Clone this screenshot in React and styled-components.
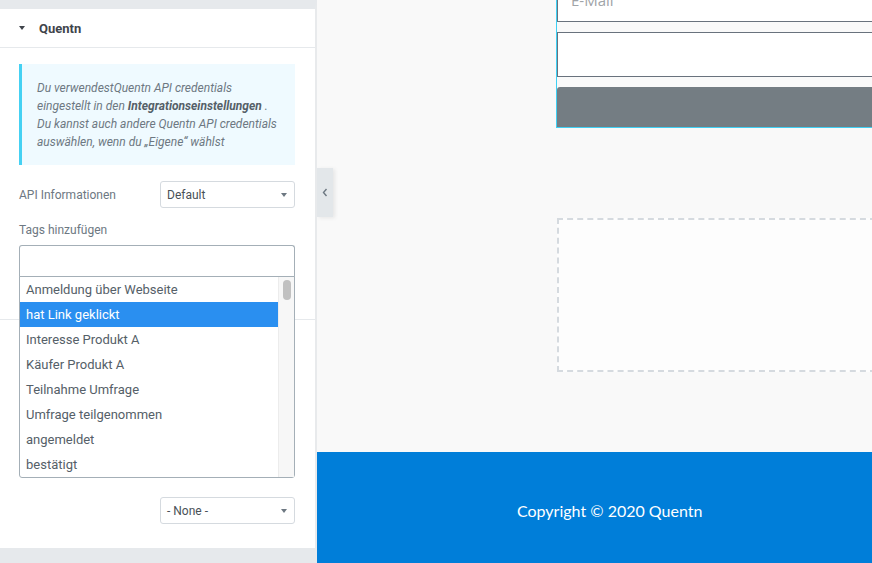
import React from 'react';
import styled, { createGlobalStyle } from 'styled-components';

const GlobalStyle = createGlobalStyle`
    html, body {
        margin: 0;
        padding: 0;
        height: 100%;
        overflow: hidden;
    }
    body {
        font-family: Roboto, "Liberation Sans", sans-serif;
    }
`;

const Screen = styled.div`
    display: flex;
    width: 872px;
    height: 563px;
    overflow: hidden;
`;

const Panel = styled.aside`
    width: 317px;
    flex-shrink: 0;
    display: flex;
    flex-direction: column;
    background: #fff;
    border-right: 2px solid #e8eaec;
    border-top: 9px solid #e6e9ec;
    border-bottom: 15px solid #e6e9ec;
    box-sizing: border-box;
`;

const SectionHead = styled.div`
    height: 39px;
    display: flex;
    align-items: center;
    gap: 14px;
    padding-left: 19px;
    border-bottom: 1px solid #e6e9ec;
    box-sizing: border-box;
    font-size: 13px;
    font-weight: 700;
    color: #3f444b;
`;

const Caret = styled.span`
    width: 0;
    height: 0;
    border-left: 3.5px solid transparent;
    border-right: 3.5px solid transparent;
    border-top: 4px solid ${p => p.color || '#495157'};
`;

const SectionBody = styled.div`
    padding: 16px 20px 0 19px;
    display: flex;
    flex-direction: column;
`;

const InfoBox = styled.div`
    background: #effaff;
    border-left: 3px solid #45d1f3;
    padding: 15px 10px 14px 15px;
    font-size: 12px;
    font-style: italic;
    line-height: 18px;
    color: #6d7882;
    white-space: nowrap;

    b {
        font-weight: 700;
        color: #556068;
    }
`;

const ControlRow = styled.div`
    display: flex;
    align-items: center;
    justify-content: space-between;
    margin-top: ${p => p.$top || 0}px;
`;

const Label = styled.div`
    font-size: 12px;
    color: #6d7882;
    margin-top: ${p => p.$top || 0}px;
`;

const Select = styled.div`
    width: 135px;
    height: 27px;
    box-sizing: border-box;
    border: 1px solid #d5dadf;
    border-radius: 3px;
    display: flex;
    align-items: center;
    justify-content: space-between;
    padding: 0 7px 0 6px;
    font-size: 12px;
    color: #495157;
`;

const TagsField = styled.div`
    position: relative;
    margin-top: 8px;
`;

const TagsInput = styled.div`
    height: 32px;
    box-sizing: border-box;
    border: 1px solid #a4afb7;
    border-bottom: none;
    border-radius: 3px 3px 0 0;
    background: #fff;
`;

const DropList = styled.ul`
    position: absolute;
    top: 31px;
    left: 0;
    right: 0;
    margin: 0;
    padding: 0;
    list-style: none;
    background: #fff;
    border: 1px solid #a4afb7;
    border-radius: 0 0 3px 3px;
    padding-right: 16px;
    z-index: 5;

    &::after {
        content: '';
        position: absolute;
        top: 0;
        right: 0;
        bottom: 0;
        width: 15px;
        background: #f7f7f7;
        border-left: 1px solid #ececec;
    }
`;

const Thumb = styled.span`
    position: absolute;
    top: 3px;
    right: 3px;
    width: 8px;
    height: 20px;
    border-radius: 4px;
    background: #c1c1c1;
    z-index: 1;
`;

const DropItem = styled.li`
    height: 25px;
    line-height: 25px;
    padding-left: 6px;
    font-size: 13px;
    color: ${p => (p.$active ? '#fff' : '#556068')};
    background: ${p => (p.$active ? '#2a8ff0' : 'transparent')};
`;

const Separator = styled.div`
    height: 1px;
    background: #e6e9ec;
    margin-top: 42px;
`;

const NoneRow = styled.div`
    display: flex;
    justify-content: flex-end;
    padding: 177px 20px 0 19px;
`;

const Canvas = styled.main`
    position: relative;
    flex: 1;
    display: flex;
    flex-direction: column;
    background: #f9f9f9;
    overflow: hidden;
`;

const Toggle = styled.div`
    position: absolute;
    left: 0;
    top: 168px;
    width: 16px;
    height: 49px;
    background: #e3e7ea;
    box-shadow: 2px 1px 4px rgba(0, 0, 0, 0.08);
    display: flex;
    align-items: center;
    justify-content: center;
    color: #6d7882;
`;

const PageContent = styled.div`
    flex: 1;
    padding-left: 239px;
`;

const FormWidget = styled.div`
    width: 420px;
    margin-top: -23px;
    border: 1px solid #3fd0f4;
    display: flex;
    flex-direction: column;
    gap: 10px;
`;

const Field = styled.div`
    height: ${p => p.$h}px;
    box-sizing: border-box;
    background: #fff;
    border: 1px solid #69727d;
    display: flex;
    align-items: center;
    padding-left: 13px;
    font-family: "Open Sans", "Liberation Sans", sans-serif;
    font-size: 15px;
    color: #a0a4a8;
`;

const SubmitButton = styled.div`
    height: 40px;
    background: #747d83;
    border-radius: 3px 0 0 0;
`;

const DropZone = styled.div`
    width: 420px;
    height: 154px;
    margin-top: 90px;
    margin-left: 1px;
    box-sizing: border-box;
    border: 2px dashed #d5dadf;
    background: #fdfdfd;
`;

const Footer = styled.footer`
    height: 111px;
    flex-shrink: 0;
    background: #007ed9;
    display: flex;
    align-items: center;
    padding-left: 200px;
    padding-top: 6px;
    font-family: Lato, "Liberation Sans", sans-serif;
    font-size: 16px;
    color: #fff;
    box-sizing: border-box;
`;

const tags = [
    'Anmeldung über Webseite',
    'hat Link geklickt',
    'Interesse Produkt A',
    'Käufer Produkt A',
    'Teilnahme Umfrage',
    'Umfrage teilgenommen',
    'angemeldet',
    'bestätigt',
];

const Chevron = () => (
    <svg width="6" height="9" viewBox="0 0 6 9">
        <path d="M4.5 1 L1.5 4.5 L4.5 8" fill="none" stroke="currentColor" strokeWidth="1.4" />
    </svg>
);

const App = () => {
    return (
        <Screen>
            <GlobalStyle />
            <Panel>
                <SectionHead>
                    <Caret color="#3f444b" />
                    Quentn
                </SectionHead>
                <SectionBody>
                    <InfoBox>
                        Du verwendestQuentn API credentials<br />
                        eingestellt in den <b>Integrationseinstellungen</b> .<br />
                        Du kannst auch andere Quentn API credentials<br />
                        auswählen, wenn du „Eigene“ wählst
                    </InfoBox>
                    <ControlRow $top={16}>
                        <Label>API Informationen</Label>
                        <Select>
                            Default
                            <Caret color="#6d7882" />
                        </Select>
                    </ControlRow>
                    <Label $top={15}>Tags hinzufügen</Label>
                    <TagsField>
                        <TagsInput />
                        <DropList>
                            <Thumb />
                            {tags.map((t, i) => (
                                <DropItem key={t} $active={i === 1}>{t}</DropItem>
                            ))}
                        </DropList>
                    </TagsField>
                </SectionBody>
                <Separator />
                <NoneRow>
                    <Select>
                        - None -
                        <Caret color="#6d7882" />
                    </Select>
                </NoneRow>
            </Panel>
            <Canvas>
                <Toggle><Chevron /></Toggle>
                <PageContent>
                    <FormWidget>
                        <Field $h={44}>E-Mail</Field>
                        <Field $h={45} />
                        <SubmitButton />
                    </FormWidget>
                    <DropZone />
                </PageContent>
                <Footer>Copyright © 2020 Quentn</Footer>
            </Canvas>
        </Screen>
    );
};

export default App;
